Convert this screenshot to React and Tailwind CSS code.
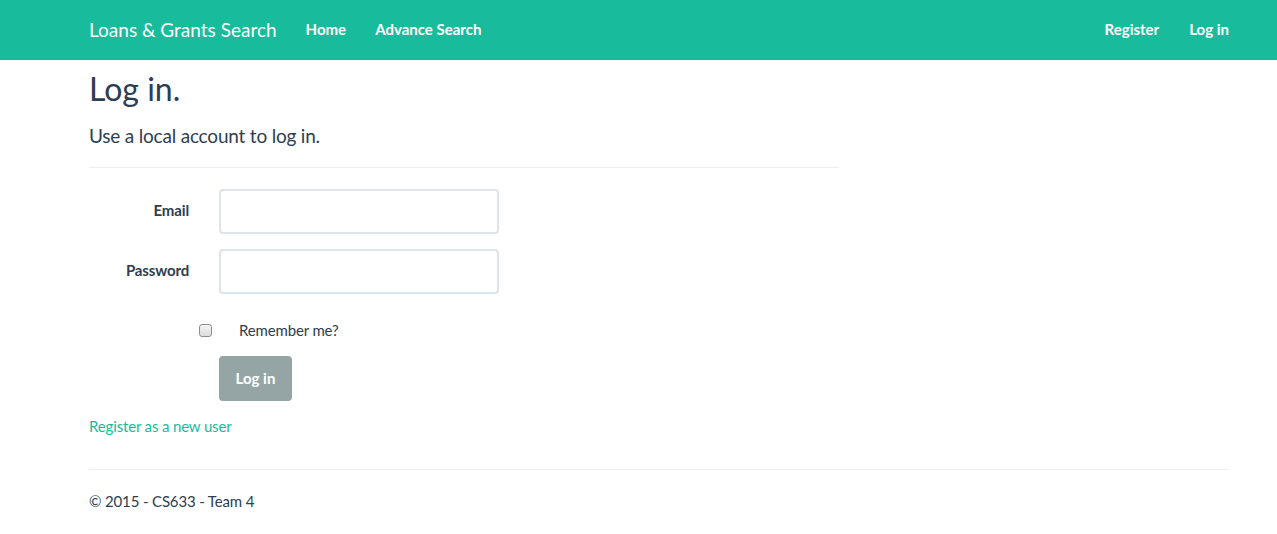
import React from 'react';

const App = () => {
  return (
    <div className="min-h-[534px] bg-white font-['Lato','Open_Sans',sans-serif] text-[15px] leading-[21px] text-[#2c3e50]">
      {/* Top navbar */}
      <nav className="h-[60px] bg-[#18bc9c] text-white">
        <div className="ml-[89px] flex h-full w-[1140px] items-center justify-between pb-[2px]">
          <div className="flex items-center">
            <a className="text-[19px] leading-[21px]">Loans &amp; Grants Search</a>
            <ul className="ml-[29px] flex gap-[29px] font-bold">
              <li><a>Home</a></li>
              <li><a>Advance Search</a></li>
            </ul>
          </div>
          <ul className="flex gap-[30px] font-bold">
            <li><a>Register</a></li>
            <li><a>Log in</a></li>
          </ul>
        </div>
      </nav>

      <main className="ml-[89px] w-[1140px] tracking-[-0.15px]">
        <h2 className="mt-[11px] text-[32px] leading-[35px] tracking-normal">Log in.</h2>

        <section className="w-[750px]">
          <h4 className="mt-[19px] text-[19px] leading-[21px] tracking-[-0.2px]">Use a local account to log in.</h4>
          <hr className="mt-[21px] mb-[21px] border-t border-[#ecf0f1]" />

          <form className="flex flex-col">
            <div className="mb-[15px] flex items-start">
              <label className="w-[100px] pt-[11px] text-right font-bold">Email</label>
              <input type="email" className="ml-[30px] h-[45px] w-[280px] rounded-[4px] border-2 border-[#dce4ec] bg-white px-[15px] outline-none" />
            </div>
            <div className="mb-[15px] flex items-start">
              <label className="w-[100px] pt-[11px] text-right font-bold">Password</label>
              <input type="password" className="ml-[30px] h-[45px] w-[280px] rounded-[4px] border-2 border-[#dce4ec] bg-white px-[15px] outline-none" />
            </div>
            <div className="mb-[15px] flex min-h-[32px] items-center pt-[10px] pl-[110px]">
              <span className="h-[13px] w-[13px] rounded-[3px] border border-[#8e8f8f] bg-gradient-to-b from-[#f4f4f4] to-[#dcdcdc]" />
              <label className="ml-[27px]">Remember me?</label>
            </div>
            <div className="mb-[15px] pl-[130px]">
              <button type="button" className="h-[45px] w-[73px] rounded-[4px] bg-[#95a5a6] font-bold tracking-normal text-white">Log in</button>
            </div>
          </form>

          <p>
            <a className="text-[#18bc9c]">Register as a new user</a>
          </p>
        </section>

        <hr className="mt-[32px] mb-[21px] border-t border-[#ecf0f1]" />
        <footer>
          <p>© 2015 - CS633 - Team 4</p>
        </footer>
      </main>
    </div>
  );
};

export default App;
